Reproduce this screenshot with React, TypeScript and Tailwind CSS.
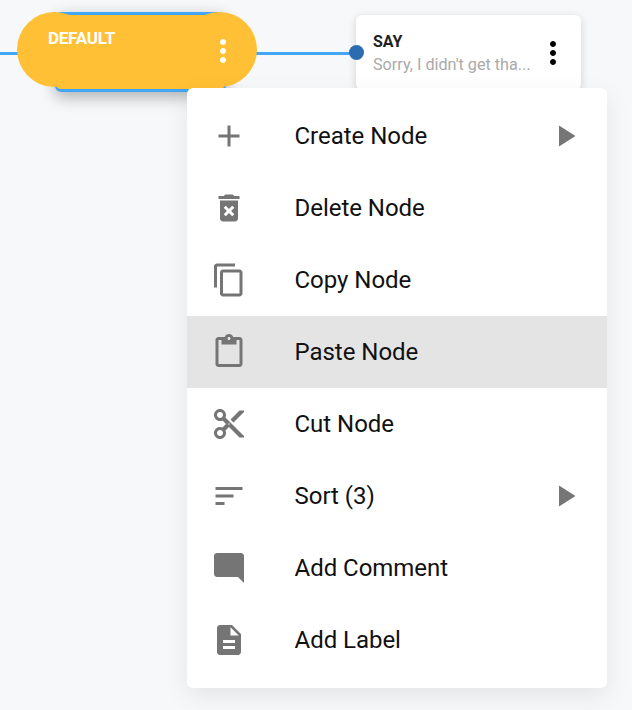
import React from 'react';

const paths = {
  add: 'M19 13h-6v6h-2v-6H5v-2h6V5h2v6h6v2z',
  trash: 'M6 19c0 1.1.9 2 2 2h8c1.1 0 2-.9 2-2V7H6v12zm2.46-7.12l1.41-1.41L12 12.59l2.12-2.12 1.41 1.41L13.41 14l2.12 2.12-1.41 1.41L12 15.41l-2.12 2.12-1.41-1.41L10.59 14l-2.13-2.12zM15.5 4l-1-1h-5l-1 1H5v2h14V4z',
  copy: 'M16 1H4c-1.1 0-2 .9-2 2v14h2V3h12V1zm3 4H8c-1.1 0-2 .9-2 2v14c0 1.1.9 2 2 2h11c1.1 0 2-.9 2-2V7c0-1.1-.9-2-2-2zm0 16H8V7h11v14z',
  paste: 'M19 2h-4.18C14.4.84 13.3 0 12 0c-1.3 0-2.4.84-2.82 2H5c-1.1 0-2 .9-2 2v16c0 1.1.9 2 2 2h14c1.1 0 2-.9 2-2V4c0-1.1-.9-2-2-2zm-7 0c.55 0 1 .45 1 1s-.45 1-1 1-1-.45-1-1 .45-1 1-1zm7 18H5V4h2v3h10V4h2v16z',
  cut: 'M9.64 7.64c.23-.5.36-1.05.36-1.64 0-2.21-1.79-4-4-4S2 3.79 2 6s1.79 4 4 4c.59 0 1.14-.13 1.64-.36L10 12l-2.36 2.36C7.14 14.13 6.59 14 6 14c-2.21 0-4 1.79-4 4s1.79 4 4 4 4-1.79 4-4c0-.59-.13-1.14-.36-1.64L12 14l7 7h3v-1L9.64 7.64zM6 8c-1.1 0-2-.89-2-2s.9-2 2-2 2 .89 2 2-.9 2-2 2zm0 12c-1.1 0-2-.89-2-2s.9-2 2-2 2 .89 2 2-.9 2-2 2zm6-7.5c-.28 0-.5-.22-.5-.5s.22-.5.5-.5.5.22.5.5-.22.5-.5.5zM19 3l-6 6 2 2 7-7V3z',
  sort: 'M3 18h6v-2H3v2zM3 6v2h18V6H3zm0 7h12v-2H3v2z',
  comment: 'M21.99 4c0-1.1-.89-2-1.99-2H4c-1.1 0-2 .9-2 2v12c0 1.1.9 2 2 2h14l4 4-.01-18z',
  label: 'M14 2H6c-1.1 0-1.99.9-1.99 2L4 20c0 1.1.89 2 1.99 2H18c1.1 0 2-.9 2-2V8l-6-6zm2 16H8v-2h8v2zm0-4H8v-2h8v2zm-3-5V3.5L18.5 9H13z',
  arrow: 'M8 5v14l11-7z',
  more: 'M12 8c1.1 0 2-.9 2-2s-.9-2-2-2-2 .9-2 2 .9 2 2 2zm0 2c-1.1 0-2 .9-2 2s.9 2 2 2 2-.9 2-2-.9-2-2-2zm0 6c-1.1 0-2 .9-2 2s.9 2 2 2 2-.9 2-2-.9-2-2-2z',
};

const Icon = ({ d, className }: { d: string; className: string }) => (
  <svg viewBox="0 0 24 24" fill="currentColor" className={className}>
    <path d={d} />
  </svg>
);

const items = [
  { label: 'Create Node', icon: paths.add, sub: true },
  { label: 'Delete Node', icon: paths.trash },
  { label: 'Copy Node', icon: paths.copy },
  { label: 'Paste Node', icon: paths.paste, active: true },
  { label: 'Cut Node', icon: paths.cut },
  { label: 'Sort (3)', icon: paths.sort, sub: true },
  { label: 'Add Comment', icon: paths.comment },
  { label: 'Add Label', icon: paths.label },
];

export default function App() {
  return (
    <div className="relative w-[632px] h-[710px] overflow-hidden bg-[#f7f8fa] font-['Roboto',sans-serif]">
      {/* connector line + port */}
      <div className="absolute left-0 top-[52px] w-[357px] h-[3px] bg-[#42a5f5]" />
      <div className="absolute left-[349px] top-[45px] w-[15px] h-[15px] rounded-full bg-[#2b6cb0] z-10" />

      {/* default node: blue box with a round cap each side */}
      <div className="absolute left-[17px] top-[12px] w-[240px] h-[80px]">
        <div className="absolute left-[38px] top-0 w-[171px] h-[80px] rounded-[6px] bg-[#ffc035] border-y-[3px] border-x-[2px] border-[#42a5f5] shadow-[0_5px_16px_rgba(0,0,0,0.3)]" />
        <div className="absolute left-0 top-0 w-[75px] h-[75px] rounded-full bg-[#ffc035]" />
        <div className="absolute right-0 top-0 w-[75px] h-[75px] rounded-full bg-[#ffc035]" />
        <div className="relative h-[75px] flex items-start justify-between pl-[31px] pr-[16px]">
          <span className="pt-[16px] text-[17px] leading-[20px] font-bold tracking-[-0.25px] text-white">DEFAULT</span>
          <Icon d={paths.more} className="mt-[21px] w-[36px] h-[36px] text-white" />
        </div>
      </div>

      {/* say node */}
      <div className="absolute left-[356px] top-[15px] w-[225px] h-[75px] rounded-[6px] bg-white shadow-[0_2px_8px_rgba(0,0,0,0.16)] flex items-center pl-[17px] pr-[10px]">
        <div className="flex-1 min-w-0 pt-[5px]">
          <div className="text-[16px] leading-[20px] font-bold text-[#212121]">SAY</div>
          <div className="whitespace-nowrap text-[16.2px] leading-[26px] text-[#aaaaaa]">Sorry, I didn't get tha...</div>
        </div>
        <Icon d={paths.more} className="w-[36px] h-[36px] text-black" />
      </div>

      {/* context menu */}
      <div className="absolute left-[187px] top-[88px] w-[420px] rounded-[6px] bg-white py-[12px] shadow-[0_8px_24px_rgba(0,0,0,0.08)] z-20">
        {items.map(item => (
          <div key={item.label} className={`h-[72px] flex items-center px-[24px] ${item.active ? 'bg-[#e4e4e4]' : ''}`}>
            <Icon d={item.icon} className="w-[36px] h-[36px] text-[#757575] shrink-0" />
            <span className="ml-[47.5px] flex-1 text-[24px] leading-[32px] tracking-[-0.03px] text-[#111111]">{item.label}</span>
            {item.sub && <Icon d={paths.arrow} className="w-[36px] h-[36px] text-[#757575]" />}
          </div>
        ))}
      </div>
    </div>
  );
}
